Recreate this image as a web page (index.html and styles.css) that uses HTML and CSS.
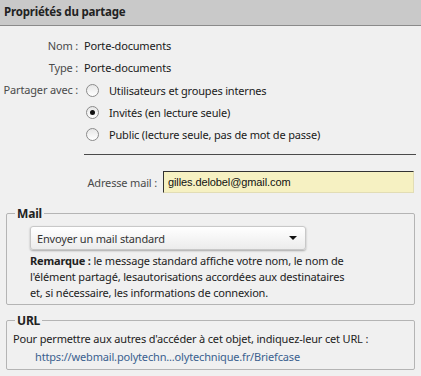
FILE: index.html
```html
<!DOCTYPE html>
<html lang="fr">

<head>
  <meta charset="UTF-8">
  <title>Propriétés du partage</title>
  <link rel="stylesheet" href="styles.css">
</head>

<body>
  <div class="header">Propriétés du partage</div>

  <div class="content">
    <div class="row info">
      <span class="label">Nom :</span>
      <span>Porte-documents</span>
    </div>
    <div class="row info">
      <span class="label">Type :</span>
      <span>Porte-documents</span>
    </div>

    <div class="row share">
      <span class="label">Partager avec :</span>
      <div class="options">
        <label class="option"><span class="radio"></span>Utilisateurs et groupes internes</label>
        <label class="option"><span class="radio checked"></span>Invités (en lecture seule)</label>
        <label class="option"><span class="radio"></span>Public (lecture seule, pas de mot de passe)</label>
      </div>
    </div>

    <div class="separator"></div>

    <div class="row address">
      <span class="label">Adresse mail :</span>
      <div class="input">gilles.delobel@gmail.com</div>
    </div>

    <fieldset class="group mail">
      <legend>Mail</legend>
      <div class="select">
        <span>Envoyer un mail standard</span>
        <span class="arrow"></span>
      </div>
      <p class="note"><b>Remarque :</b> le message standard affiche votre nom, le nom de<br>
        l'élément partagé, lesautorisations accordées aux destinataires<br>
        et, si nécessaire, les informations de connexion.</p>
    </fieldset>

    <fieldset class="group url">
      <legend>URL</legend>
      <p>Pour permettre aux autres d'accéder à cet objet, indiquez-leur cet URL :</p>
      <a class="link" href="#">https://webmail.polytechn...olytechnique.fr/Briefcase</a>
    </fieldset>
  </div>
</body>

</html>
```

FILE: styles.css
```css
body {
  margin: 0;
  padding: 0;
  background-color: #f0f0f0;
  color: #1a1a1a;
  font-family: 'Noto Sans', 'Open Sans', sans-serif;
  font-size: 11px;
  letter-spacing: -0.17px;
}

.header {
  height: 25px;
  line-height: 23px;
  padding-left: 4px;
  background-color: #c9c9c9;
  border-bottom: 1px solid #8a8a8a;
  font-weight: bold;
  font-size: 11.5px;
  letter-spacing: -0.2px;
  color: #222;
}

.content {
  padding: 8px 6px 0 0;
}

.row {
  display: flex;
  align-items: center;
}

.label {
  width: 78px;
  flex-shrink: 0;
  text-align: right;
  margin-right: 6px;
  color: #4a4a4a;
}

.info {
  height: 22px;
}

.share {
  align-items: flex-start;
  margin-top: 1px;
}

.share .label {
  line-height: 22px;
  margin-right: 8px;
}

.options {
  display: flex;
  flex-direction: column;
}

.option {
  display: flex;
  align-items: center;
  height: 22px;
}

.radio {
  width: 11px;
  height: 11px;
  border: 1px solid #8b8b8b;
  border-radius: 50%;
  background: linear-gradient(#e6e6e6, #fff);
  margin-right: 10px;
  position: relative;
}

.radio.checked::after {
  content: '';
  position: absolute;
  left: 3px;
  top: 3px;
  width: 5px;
  height: 5px;
  border-radius: 50%;
  background-color: #111;
}

.separator {
  margin: 9px 0 0 84px;
  width: 332px;
  border-top: 1px solid #4a4a4a;
}

.address {
  margin-top: 16px;
}

.address .label {
  width: 157px;
}

.input {
  width: 245px;
  height: 20px;
  line-height: 20px;
  padding-left: 4px;
  background-color: #f6f1c2;
  border-top: 1px solid #333;
  border-left: 1px solid #333;
  border-right: 1px solid #e2ddb5;
  border-bottom: 1px solid #e2ddb5;
  font-family: 'Liberation Sans', Arial, sans-serif;
  font-size: 11px;
  letter-spacing: -0.1px;
  color: #111;
}

.group {
  margin: 12px 0 0 6px;
  padding: 0 6px 3px 6px;
  border: 1px solid #b4b4b4;
  border-radius: 2px;
}

.group legend {
  padding: 0 2px;
  margin-left: 2px;
  font-weight: bold;
  font-size: 12px;
  color: #222;
}

.select {
  margin: 4px 0 0 17px;
  width: 260px;
  height: 22px;
  padding: 0 8px 0 6px;
  display: flex;
  align-items: center;
  justify-content: space-between;
  background: linear-gradient(#ffffff, #ececec);
  border: 1px solid #c8c8c8;
  border-radius: 3px;
  box-shadow: 0 1px 2px rgba(0, 0, 0, 0.3);
  color: #333;
}

.arrow {
  width: 0;
  height: 0;
  border-left: 4px solid transparent;
  border-right: 4px solid transparent;
  border-top: 4px solid #111;
}

.note {
  margin: 3px 0 0 17px;
  line-height: 16px;
  color: #222;
}

.url {
  margin-top: 7px;
  padding-bottom: 3px;
}

.url p {
  margin: 1px 0 0 0;
  line-height: 18px;
  color: #222;
}

.link {
  display: block;
  margin-left: 22px;
  line-height: 18px;
  color: #3a5f8f;
  text-decoration: none;
}
```
